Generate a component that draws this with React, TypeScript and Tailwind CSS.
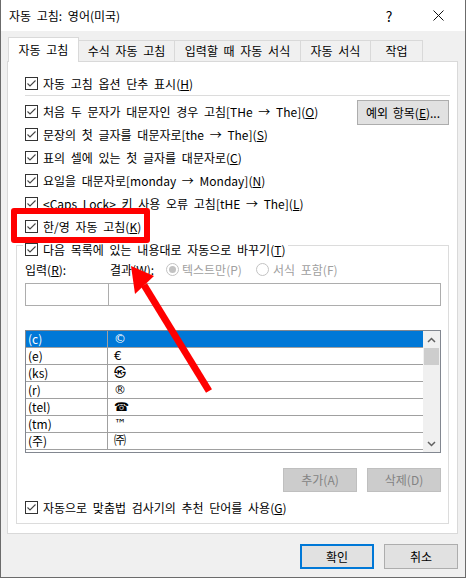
import type { ReactNode } from "react";

function CheckBox() {
  return (
    <svg width="13" height="13" viewBox="0 0 13 13" className="shrink-0">
      <rect x="0.5" y="0.5" width="12" height="12" fill="#fff" stroke="#333" />
      <path d="M2.5 6.5 L5 9 L10.5 3.5" fill="none" stroke="#444" strokeWidth="1.1" />
    </svg>
  );
}

function CheckRow({ children, className = "" }: { children: ReactNode; className?: string }) {
  return (
    <div className={`flex h-[23px] items-center gap-[5px] ${className}`}>
      <CheckBox />
      <span className="leading-[16px] whitespace-nowrap">{children}</span>
    </div>
  );
}

function Radio({ on }: { on?: boolean }) {
  return (
    <svg width="13" height="13" viewBox="0 0 13 13" className="shrink-0">
      <circle cx="6.5" cy="6.5" r="6" fill="#fff" stroke="#c2c2c2" />
      {on && <circle cx="6.5" cy="6.5" r="3.5" fill="#c2c2c2" />}
    </svg>
  );
}

const entries = [
  { from: "(c)", to: "©" },
  { from: "(e)", to: "€" },
  { from: "(ks)", to: "㉿" },
  { from: "(r)", to: "®" },
  { from: "(tel)", to: "☎" },
  { from: "(tm)", to: "™" },
  { from: "(주)", to: "㈜" },
];

export default function App() {
  return (
    <div className="relative w-[466px] h-[578px] bg-[#f0f0f0] border-x border-b border-[#6b6b6b] text-[12px] text-black [word-spacing:3px] font-['Noto_Sans_CJK_KR','Liberation_Sans',sans-serif] overflow-hidden">
      {/* Title bar */}
      <div className="flex h-[31px] items-center bg-white pl-[8px]">
        <span className="flex-1 leading-[16px]">자동 고침: 영어(미국)</span>
        <span className="w-[20px] text-center text-[14px] leading-[16px]">?</span>
        <div className="flex w-[46px] justify-center ml-[16px] mr-[4px]">
          <svg width="11" height="11" viewBox="0 0 11 11">
            <path d="M0.5 0.5 L10.5 10.5 M10.5 0.5 L0.5 10.5" stroke="#111" strokeWidth="1" />
          </svg>
        </div>
      </div>

      {/* Tabs */}
      <div className="mt-[6px] ml-[7px] flex h-[24px] items-end">
        <div className="relative z-10 -mb-px flex h-[25px] w-[71px] items-center justify-center border border-b-0 border-[#d9d9d9] bg-white leading-[16px]">
          자동 고침
        </div>
        <div className="flex h-[21px] w-[96px] items-center justify-center border-t border-r border-[#d9d9d9] leading-[16px]">
          수식 자동 고침
        </div>
        <div className="flex h-[21px] w-[126px] items-center justify-center border-t border-r border-[#d9d9d9] leading-[16px]">
          입력할 때 자동 서식
        </div>
        <div className="flex h-[21px] w-[70px] items-center justify-center border-t border-r border-[#d9d9d9] leading-[16px]">
          자동 서식
        </div>
        <div className="flex h-[21px] w-[52px] items-center justify-center border-t border-r border-[#d9d9d9] leading-[16px]">
          작업
        </div>
      </div>

      {/* Panel */}
      <div className="ml-[6px] h-[473px] w-[451px] border border-[#d9d9d9] bg-white pt-[10px]">
        <CheckRow className="pl-[17px]">
          자동 고침 옵션 단추 표시(<u>H</u>)
        </CheckRow>
        <div className="ml-[17px] h-px w-[425px] bg-[#dcdcdc]" />

        <div className="mt-[4px] flex h-[23px] items-start justify-between pl-[17px] pr-[8px]">
          <CheckRow>
            처음 두 문자가 대문자인 경우 고침[THe → The](<u>O</u>)
          </CheckRow>
          <button className="flex h-[25px] w-[92px] items-center justify-center border border-[#adadad] bg-[#e1e1e1] leading-[16px] [word-spacing:2px]">
            예외 항목(<u>E</u>)...
          </button>
        </div>
        <CheckRow className="pl-[17px]">
          문장의 첫 글자를 대문자로[the → The](<u>S</u>)
        </CheckRow>
        <CheckRow className="pl-[17px]">
          표의 셀에 있는 첫 글자를 대문자로(<u>C</u>)
        </CheckRow>
        <CheckRow className="pl-[17px]">
          요일을 대문자로[monday → Monday](<u>N</u>)
        </CheckRow>
        <CheckRow className="pl-[17px]">
          &lt;Caps Lock&gt; 키 사용 오류 고침[tHE → The](<u>L</u>)
        </CheckRow>
        <CheckRow className="pl-[17px]">
          한/영 자동 고침(<u>K</u>)
        </CheckRow>

        {/* Replace group */}
        <div className="ml-[8px] mt-[7px] h-[279px] w-[433px] border border-[#dcdcdc]">
          <CheckRow className="-mt-[8px] ml-[6px] w-fit bg-white pl-[2px] pr-[3px]">
            다음 목록에 있는 내용대로 자동으로 바꾸기(<u>T</u>)
          </CheckRow>

          <div className="flex h-[17px] items-center pl-[8px] leading-[16px]">
            <span className="w-[85px]">
              입력(<u>R</u>):
            </span>
            <span className="w-[56px]">
              결과(<u>W</u>):
            </span>
            <div className="flex w-[90px] items-center gap-[3px] text-[#a0a0a0]">
              <Radio on />
              <span>텍스트만(P)</span>
            </div>
            <div className="flex items-center gap-[4px] text-[#a0a0a0]">
              <Radio />
              <span>서식 포함(F)</span>
            </div>
          </div>

          <div className="ml-[8px] mt-[5px] flex h-[23px] w-[416px]">
            <div className="w-[84px] border border-[#adadad]" />
            <div className="flex-1 border border-l-0 border-[#adadad]" />
          </div>

          {/* List */}
          <div className="ml-[8px] mt-[24px] flex h-[123px] w-[416px] border border-[#828790]">
            <div className="flex-1">
              {entries.map((e, i) => (
                <div
                  key={e.from}
                  className={`flex h-[17px] border-b border-[#a0a0a0] leading-[16px] ${
                    i === 0 ? "bg-[#0078d7] text-white" : ""
                  }`}
                >
                  <div className="w-[82px] border-r border-[#a0a0a0] pl-[2px]">{e.from}</div>
                  <div className="pl-[6px] font-['DejaVu_Sans','Noto_Sans_CJK_KR',sans-serif]">{e.to}</div>
                </div>
              ))}
            </div>
            <div className="flex w-[17px] flex-col bg-[#f0f0f0]">
              <div className="flex h-[17px] items-center justify-center">
                <svg width="9" height="6" viewBox="0 0 9 6">
                  <path d="M1 5 L4.5 1.5 L8 5" fill="none" stroke="#606060" strokeWidth="1.5" />
                </svg>
              </div>
              <div className="mx-px h-[17px] bg-[#cdcdcd]" />
              <div className="flex-1" />
              <div className="flex h-[17px] items-center justify-center">
                <svg width="9" height="6" viewBox="0 0 9 6">
                  <path d="M1 1 L4.5 4.5 L8 1" fill="none" stroke="#606060" strokeWidth="1.5" />
                </svg>
              </div>
            </div>
          </div>

          <div className="mt-[15px] flex justify-end gap-[10px] pr-[7px]">
            <button className="flex h-[24px] w-[74px] items-center justify-center border border-[#bfbfbf] bg-[#cccccc] leading-[16px] text-[#838383]">
              추가(A)
            </button>
            <button className="flex h-[24px] w-[74px] items-center justify-center border border-[#bfbfbf] bg-[#cccccc] leading-[16px] text-[#838383]">
              삭제(D)
            </button>
          </div>

          <CheckRow className="mt-[4px] pl-[8px]">
            자동으로 맞춤법 검사기의 추천 단어를 사용(<u>G</u>)
          </CheckRow>
        </div>
      </div>

      {/* Dialog buttons */}
      <div className="mt-[10px] flex justify-end gap-[10px] pr-[7px]">
        <button className="flex h-[25px] w-[74px] items-center justify-center border-2 border-[#0078d7] bg-[#e1e1e1] leading-[16px]">
          확인
        </button>
        <button className="flex h-[25px] w-[74px] items-center justify-center border border-[#adadad] bg-[#e1e1e1] leading-[16px]">
          취소
        </button>
      </div>

      {/* Annotation overlay */}
      <div className="absolute left-[10px] top-[208px] h-[35px] w-[139px] rounded-[3px] border-[6px] border-[#ff0000]" />
      <svg className="pointer-events-none absolute left-0 top-0" width="466" height="578" viewBox="0 0 466 578">
        <line x1="208" y1="391" x2="143" y2="285" stroke="#ff0000" strokeWidth="7" />
        <polygon points="130,266 153,276 134,294" fill="#ff0000" />
      </svg>
    </div>
  );
}
